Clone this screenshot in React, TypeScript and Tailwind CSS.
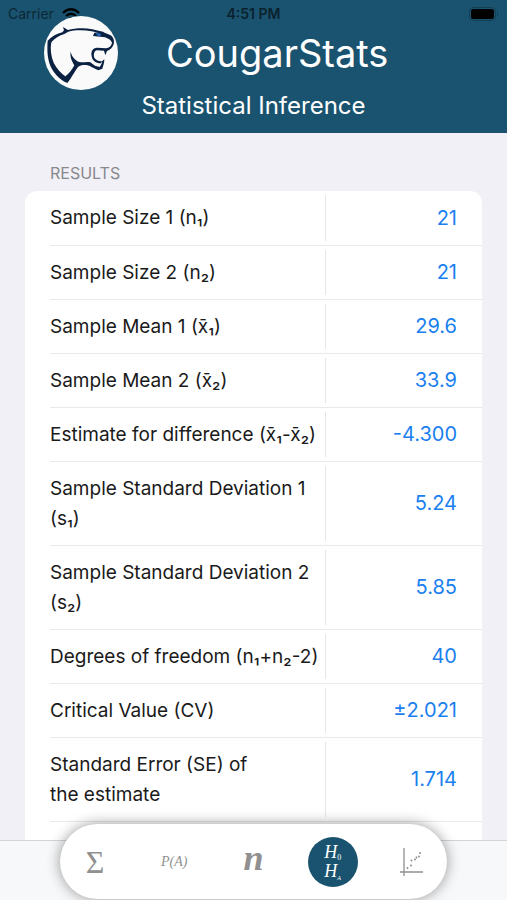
import React from "react";

const results = [
  { label: "Sample Size 1 (n₁)", value: "21" },
  { label: "Sample Size 2 (n₂)", value: "21" },
  { label: "Sample Mean 1 (x̄₁)", value: "29.6" },
  { label: "Sample Mean 2 (x̄₂)", value: "33.9" },
  { label: "Estimate for difference (x̄₁-x̄₂)", value: "-4.300" },
  { label: "Sample Standard Deviation 1 (s₁)", value: "5.24" },
  { label: "Sample Standard Deviation 2 (s₂)", value: "5.85" },
  { label: "Degrees of freedom (n₁+n₂-2)", value: "40" },
  { label: "Critical Value (CV)", value: "±2.021" },
  { label: "Standard Error (SE) of\nthe estimate", value: "1.714" },
  { label: "", value: "" },
];

const CougarLogo = () => (
  <svg viewBox="7 3 222 222" className="size-[74px] shrink-0" role="img" aria-label="Cougar">
    <circle cx="118" cy="114" r="111" fill="#fafafa" />
    <g fill="#0b2142">
      {/* Ear and back of the neck */}
      <path d="M64 36 L79 45 C98 40 128 38 152 43 L186 51 L184 56 L150 49 C126 44 98 45 80 50 L68 57 C50 62 38 71 29 82 C25 102 28 124 36 143 C44 160 58 175 75 187 L77 204 C54 194 34 172 26 152 C17 129 16 103 18 77 C30 64 46 56 62 52 L67 46 Z" />
      {/* Throat */}
      <path d="M77 204 L71 184 C82 176 92 163 98 151 C91 139 84 126 87 110 C91 126 101 136 113 141 C123 144 135 139 146 142 L160 152 L174 156 L179 148 L184 140 L186 148 L182 161 L170 166 C156 160 146 152 134 150 C122 149 116 151 110 155 C102 164 90 188 77 204 Z" />
      {/* Muzzle and mouth */}
      <path d="M182 50 L207 61 C215 67 219 77 216 88 C213 98 205 105 196 108 L191 121 L187 107 L166 106 C158 107 156 116 157 125 C160 135 170 138 181 139 L178 145 C161 145 152 137 150 124 C147 108 153 99 166 98 L193 100 C203 98 210 92 211 83 C208 75 199 70 190 67 L154 63 L158 53 Z" />
      <path d="M181 139 L188 133 L187 145 L180 149 Z" />
    </g>
    <path d="M163 54 L178 56 L176 64 L166 61 Z" fill="#2a6bc0" />
  </svg>
);

const WifiIcon = () => (
  <svg viewBox="0 0 18 13" className="h-[13px] w-[18px]" aria-hidden="true">
    <g fill="none" stroke="black" strokeWidth="2.2">
      <path d="M1 5 Q9 -2.500 17 5" />
      <path d="M4 8 Q9 3.500 14 8" />
    </g>
    <path d="M6.300 10 Q9 7.800 11.700 10 L9 13 Z" />
  </svg>
);

const BatteryIcon = () => (
  <svg viewBox="0 0 30 14" className="h-[14px] w-[30px]" aria-label="Battery full" role="img">
    <rect x="0.500" y="0.500" width="26" height="13" rx="4" fill="none" stroke="#123f52" />
    <rect x="2" y="2" width="23" height="10" rx="2.500" />
    <path d="M28 4.500 Q30 7 28 9.500 Z" fill="#123f52" />
  </svg>
);

const ScatterIcon = () => (
  <svg viewBox="0 0 24 28" className="h-7 w-6" aria-hidden="true">
    <path d="M4 0 V28 M0 24 H23" fill="none" stroke="#909090" strokeWidth="1.300" />
    <g fill="#858585">
      <circle cx="7.500" cy="20" r="0.900" />
      <circle cx="11" cy="17.500" r="0.900" />
      <circle cx="11.500" cy="12.500" r="0.900" />
      <circle cx="15" cy="11.500" r="0.900" />
      <circle cx="16.500" cy="9.500" r="0.900" />
      <circle cx="19" cy="8.500" r="0.900" />
      <circle cx="20" cy="5" r="0.900" />
    </g>
  </svg>
);

const tabs = [
  {
    name: "Descriptive statistics",
    icon: <span className="text-[32px] leading-none">Σ</span>,
  },
  {
    name: "Probability",
    icon: <span className="text-sm italic">P(A)</span>,
  },
  {
    name: "Sample size",
    icon: <span className="pb-2 text-[36px] leading-none font-bold italic">n</span>,
  },
  {
    name: "Statistical inference",
    active: true,
    icon: (
      <span className="flex flex-col text-lg leading-[19px] italic">
        <span className="flex items-end">
          H<sub className="static text-[8px] leading-[8px] not-italic">0</sub>
        </span>
        <span className="flex items-end">
          H<sub className="static text-[6px] leading-[6px]">A</sub>
        </span>
      </span>
    ),
  },
  { name: "Regression", icon: <ScatterIcon /> },
];

const Header = () => (
  <header className="relative z-10 shrink-0 bg-[#1a536f] text-white">
    <div className="grid h-7 grid-cols-3 items-center px-2 text-sm text-black">
      <div className="flex items-center gap-2 text-[#0c2836]">
        Carrier
        <WifiIcon />
      </div>
      <div className="text-center font-semibold text-[#0a222e]">4:51 PM</div>
      <div className="flex justify-end">
        <BatteryIcon />
      </div>
    </div>
    <div className="-mt-3 flex h-[74px] items-center pl-11">
      <CougarLogo />
      <h1 className="pl-12 text-[38px] leading-none">CougarStats</h1>
    </div>
    <h2 className="h-[43px] text-center text-2xl leading-8">Statistical Inference</h2>
  </header>
);

const ResultsTable = () => (
  <div className="overflow-hidden rounded-xl bg-white pl-[25px]">
    <table className="w-full text-[19px] leading-[30px]" aria-labelledby="results-title">
      <tbody>
        {results.map((row, index) => (
          <tr key={index} className="h-[54px] border-b border-[#e9e9eb]">
            <th scope="row" className="pt-3 pb-[11px] text-left font-normal whitespace-pre-line text-[#1a1a1a]">
              {row.label}
            </th>
            <td className="relative w-[157px] pr-[25px] text-right text-xl text-[#1a80f0] before:absolute before:inset-y-1 before:left-0 before:w-px before:bg-[#e6e6e9]">
              {row.value}
            </td>
          </tr>
        ))}
      </tbody>
    </table>
  </div>
);

const TabBar = () => (
  <div className="absolute inset-x-0 bottom-0 flex h-[60px] items-end justify-center border-t border-[#d4d4d8] bg-[#f7f8f9]">
    <nav
      aria-label="Sections"
      className="mb-px flex h-[75px] w-[387px] shrink-0 items-center justify-between rounded-full bg-white px-2.5 font-['Liberation_Serif',serif] shadow-[0_0_14px_rgba(0,0,0,0.4)]"
    >
      {tabs.map((tab) => (
        <button
          key={tab.name}
          type="button"
          aria-label={tab.name}
          aria-current={tab.active ? "page" : undefined}
          className={
            tab.active
              ? "flex size-[50px] items-center justify-center rounded-full bg-[#1a536f] text-white"
              : "flex size-[50px] items-center justify-center text-[#909090]"
          }
        >
          {tab.icon}
        </button>
      ))}
    </nav>
  </div>
);

export default function App() {
  return (
    <div className="relative flex h-screen flex-col overflow-hidden bg-[#f1f0f6] font-[Inter,sans-serif]">
      <Header />
      <main className="min-h-0 flex-1 overflow-hidden px-[25px] pt-7">
        <h3 id="results-title" className="pb-1.5 pl-[25px] text-base leading-6 text-[#88888d]">
          RESULTS
        </h3>
        <ResultsTable />
      </main>
      <TabBar />
    </div>
  );
}
